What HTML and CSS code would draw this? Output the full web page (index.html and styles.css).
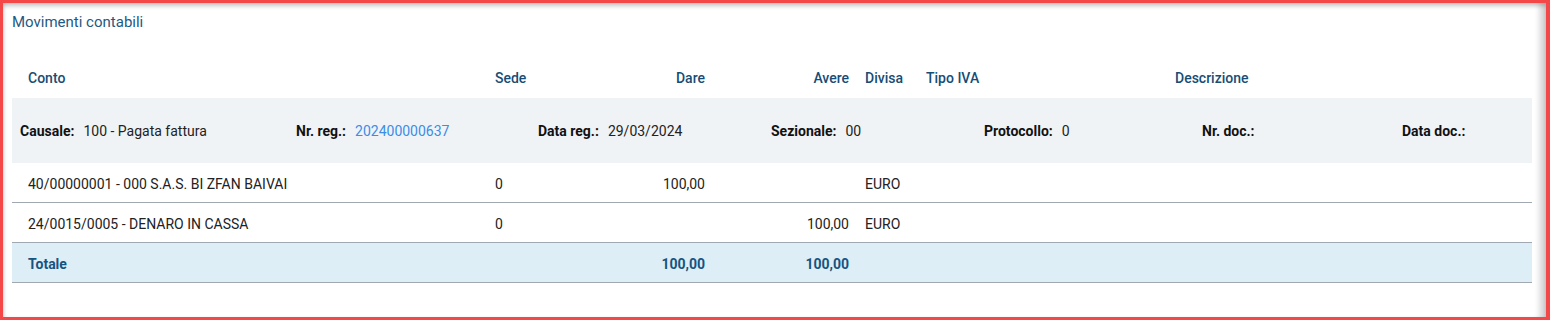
FILE: index.html
```html
<!DOCTYPE html>
<html lang="it">
<head>
<meta charset="utf-8">
<title>Movimenti contabili</title>
<link rel="stylesheet" href="styles.css">
</head>
<body>
<div class="frame">
  <div class="panel">
    <h2 class="title">Movimenti contabili</h2>
    <div class="table">
      <div class="row head">
        <div>Conto</div>
        <div>Sede</div>
        <div class="num">Dare</div>
        <div class="num">Avere</div>
        <div>Divisa</div>
        <div>Tipo IVA</div>
        <div>Descrizione</div>
      </div>
      <div class="meta">
        <div class="meta-item"><span class="lbl">Causale:</span><span>100 - Pagata fattura</span></div>
        <div class="meta-item"><span class="lbl">Nr. reg.:</span><span class="link">202400000637</span></div>
        <div class="meta-item"><span class="lbl">Data reg.:</span><span>29/03/2024</span></div>
        <div class="meta-item"><span class="lbl">Sezionale:</span><span>00</span></div>
        <div class="meta-item"><span class="lbl">Protocollo:</span><span>0</span></div>
        <div class="meta-item"><span class="lbl">Nr. doc.:</span><span></span></div>
        <div class="meta-item"><span class="lbl">Data doc.:</span><span></span></div>
      </div>
      <div class="row data">
        <div>40/00000001 - 000 S.A.S. BI ZFAN BAIVAI</div>
        <div>0</div>
        <div class="num">100,00</div>
        <div class="num"></div>
        <div>EURO</div>
        <div></div>
        <div></div>
      </div>
      <div class="row data">
        <div>24/0015/0005 - DENARO IN CASSA</div>
        <div>0</div>
        <div class="num"></div>
        <div class="num">100,00</div>
        <div>EURO</div>
        <div></div>
        <div></div>
      </div>
      <div class="row data total">
        <div>Totale</div>
        <div></div>
        <div class="num">100,00</div>
        <div class="num">100,00</div>
        <div></div>
        <div></div>
        <div></div>
      </div>
    </div>
  </div>
</div>
</body>
</html>
```

FILE: styles.css
```css
* { box-sizing: border-box; }
html, body { margin: 0; padding: 0; background: #fff; }
body {
  font-family: Roboto, "Liberation Sans", Arial, sans-serif;
  font-size: 14px;
  color: #222;
}
.frame {
  width: 1550px;
  height: 320px;
  border: 3px solid #f44848;
  border-right-width: 4px;
  background: #fff;
  box-shadow: inset 0 4px 4px -1px rgba(0,0,0,0.22), inset -10px 0 6px -4px rgba(0,0,0,0.18), inset 3px 0 4px -2px rgba(0,0,0,0.12);
}
.panel {
  padding: 9px 11px 0 9px;
}
.title {
  margin: 0;
  font-size: 15px;
  line-height: 20px;
  font-weight: 400;
  color: #1d5a84;
}
.table {
  margin-top: 26px;
  width: 1520px;
}
.row {
  display: grid;
  grid-template-columns: 451px 80px 114px 128px 45px 233px 1fr;
  column-gap: 16px;
  padding-left: 16px;
  align-items: center;
}
.num { text-align: right; }
.head {
  height: 40px;
  color: #174d75;
  font-weight: 500;
}
.meta {
  height: 65px;
  background: #f0f3f6;
  display: grid;
  grid-template-columns: 276px 242px 233px 213px 218px 200px 1fr;
  padding-left: 8px;
  align-items: center;
  color: #222;
}
.meta-item { display: flex; gap: 9px; white-space: nowrap; }
.lbl { font-weight: 700; color: #111; }
.link { color: #3b8de6; }
.data {
  height: 40px;
  border-bottom: 1px solid #a0a8b2;
  padding-top: 3px;
}
.total {
  background: #ddeef6;
  color: #165480;
  font-weight: 700;
}
```
